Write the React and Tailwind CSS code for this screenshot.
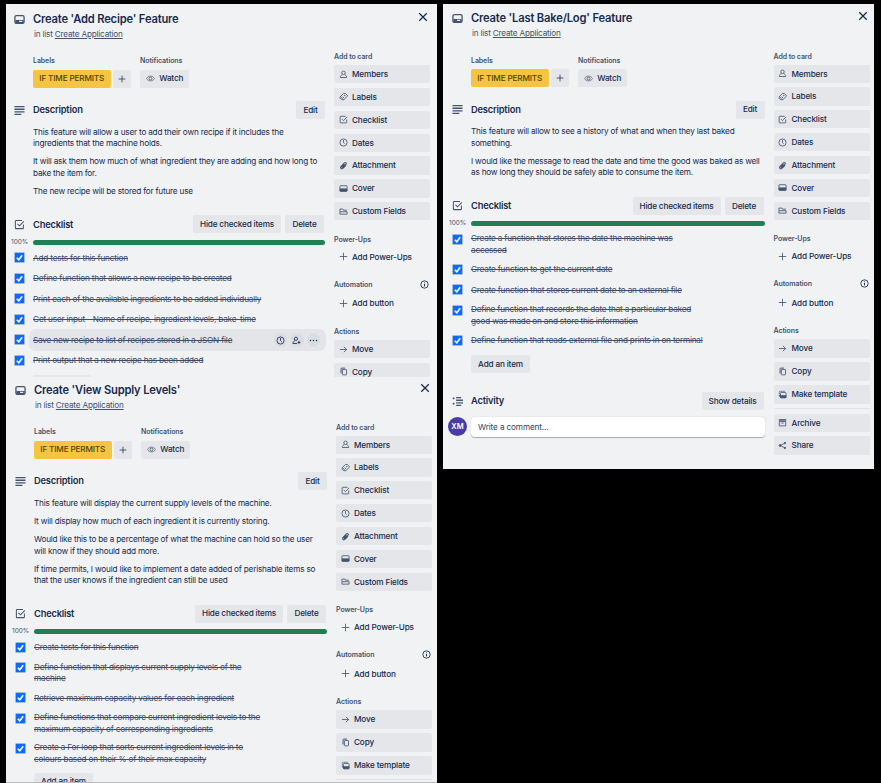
import React from "react";

const paths = {
  card: (
    <>
      <rect x="2" y="3.5" width="20" height="17" rx="3" strokeWidth="2.8" />
      <path d="M3 13h18v7H3z" fill="currentColor" stroke="none" />
      <path d="M11 16h7" stroke="#f1f2f4" strokeWidth="2.6" />
    </>
  ),
  desc: <path d="M1 3.5h22M1 9.2h22M1 14.9h22M1 20.6h15" strokeWidth="2.9" />,
  check: (
    <>
      <path d="M17.5 3.5H4.5a1.5 1.5 0 0 0-1.5 1.5v14.5a1.5 1.5 0 0 0 1.5 1.5h14.5a1.5 1.5 0 0 0 1.5-1.5V12" />
      <path d="M7.5 10.5l4.5 4.5L21.5 5" />
    </>
  ),
  member: (
    <>
      <circle cx="12" cy="7.5" r="4.6" />
      <path d="M9 12.5c-3.500 1-5.500 3.500-5.500 7.500h17c0-4-2-6.500-5.500-7.500" />
    </>
  ),
  addMember: (
    <>
      <circle cx="10.500" cy="7.500" r="4.300" />
      <path d="M8 12.500c-3.500 1-5.500 3.500-5.500 7.500h11M18.500 13v8M14.500 17h8" />
    </>
  ),
  label: (
    <>
      <path d="M4 12l7-7.500a2 2 0 0 1 1.500-.6h4.500l5 5.100a2 2 0 0 1 0 2.600l-8.500 8.400a2 2 0 0 1-2.800 0z" />
      <path d="M4 11.500c-2 2.500-1.500 5 .5 7 2 2 4.500 2.500 7 1.500M9.500 12.500l4 3.500" />
      <circle cx="15.500" cy="9.500" r="1" />
    </>
  ),
  clock: (
    <>
      <circle cx="12" cy="12" r="9.500" />
      <path d="M12 5.500v7l3 2.500" />
    </>
  ),
  clip: (
    <path
      d="M18.500 11.500l-7.500 7.700c-4.200 4-9-1-5.200-5.200l8.700-8.800c3-2.800 6.600 1 3.800 3.800l-7.800 8c-1.600 1.400-3.200-.4-1.800-1.900l6-6.200"
      strokeWidth="2.900"
    />
  ),
  cover: (
    <>
      <rect x="2.500" y="4.500" width="19" height="15" rx="1.500" />
      <path d="M3 13h18v6H3z" fill="currentColor" />
    </>
  ),
  fields: (
    <>
      <path d="M2.500 12V5.500h8l1.500 3h9" />
      <path d="M2.500 12.500h19v6.500h-19z" />
    </>
  ),
  plus: <path d="M12 2v20M2 12h20" strokeWidth="2.200" />,
  arrow: <path d="M2.500 12h18M13 5l7.500 7-7.500 7" />,
  copy: (
    <>
      <rect x="9" y="6.500" width="11" height="14.500" rx="1.500" />
      <path d="M5.500 17V4.500A1.500 1.500 0 0 1 7 3h9" strokeWidth="2.600" />
    </>
  ),
  template: (
    <>
      <path d="M3.500 16V5A1.500 1.500 0 0 1 5 3.500h13" strokeDasharray="4 1.500" />
      <rect x="6.500" y="6.500" width="15" height="14.500" rx="2" />
      <path d="M4 15h17v5H7z" fill="currentColor" />
    </>
  ),
  archive: (
    <>
      <path d="M3 4h18v3H3z" />
      <path d="M3.500 9.500h17V21h-17zM9 13.500h6" />
    </>
  ),
  share: (
    <>
      <path d="M18.500 5.500L6 12l12.500 6.500" />
      <circle cx="5.500" cy="12" r="2.500" fill="currentColor" />
      <circle cx="18.500" cy="5.500" r="2" fill="currentColor" />
      <circle cx="18.500" cy="18.500" r="2" fill="currentColor" />
    </>
  ),
  eye: (
    <>
      <path d="M1.500 12C5 3.500 19 3.500 22.500 12 19 20.500 5 20.500 1.500 12z" strokeWidth="1.700" />
      <circle cx="12" cy="12" r="4" />
    </>
  ),
  info: (
    <>
      <circle cx="12" cy="12" r="9.800" strokeWidth="2.300" />
      <path d="M12 10.500v6.500M12 6.500v2" strokeWidth="2.600" />
    </>
  ),
  dots: (
    <g fill="currentColor" stroke="none">
      <circle cx="4" cy="12" r="2" />
      <circle cx="12" cy="12" r="2" />
      <circle cx="20" cy="12" r="2" />
    </g>
  ),
  close: <path d="M3 3l18 18M21 3L3 21" strokeWidth="3" />,
  activity: (
    <>
      <path d="M9 3.500h11M9 9.200h15M9 14.900h15M9 20.600h11" strokeWidth="2.900" />
      <path d="M3.500 3v4M1.500 5h4M3.500 14.500v4M1.500 16.500h4" strokeWidth="2.600" />
    </>
  ),
};

function Icon({ name, className = "size-[9px]" }) {
  return (
    <svg
      viewBox="0 0 24 24"
      fill="none"
      stroke="currentColor"
      strokeWidth="2.2"
      className={`shrink-0 ${className}`}
    >
      {paths[name]}
    </svg>
  );
}

function Button({ children, className = "" }) {
  return (
    <button
      className={`flex h-[18px] items-center justify-center rounded-[2px] bg-[#e4e6e9] font-medium tracking-[-0.17px] whitespace-nowrap ${className}`}
    >
      {children}
    </button>
  );
}

function SideButton({ icon, children, ghost }) {
  return (
    <button
      className={`flex h-[18.3px] w-full shrink-0 items-center rounded-[2px] pl-[4.500px] font-medium tracking-[-0.14px] whitespace-nowrap ${ghost ? "" : "bg-[#e4e6e9]"}`}
    >
      <Icon name={icon} className="size-[9px] text-[#44546f]" />
      <span className="ml-[4.500px]">{children}</span>
    </button>
  );
}

function SideHeading({ children }) {
  return (
    <h3 className="flex h-[10px] items-center text-[7px] font-semibold tracking-[-0.08px] whitespace-nowrap text-[#44546f]">
      {children}
    </h3>
  );
}

function Sidebar({ full, className }) {
  return (
    <aside className={`flex shrink-0 flex-col ${className}`}>
      <div className="relative top-[0.600px]">
        <SideHeading>Add to card</SideHeading>
      </div>
      <div className="mt-[3px] flex flex-col gap-[4.550px]">
        <SideButton icon="member">Members</SideButton>
        <SideButton icon="label">Labels</SideButton>
        <SideButton icon="check">Checklist</SideButton>
        <SideButton icon="clock">Dates</SideButton>
        <SideButton icon="clip">Attachment</SideButton>
        <SideButton icon="cover">Cover</SideButton>
        <SideButton icon="fields">Custom Fields</SideButton>
      </div>
      <div className="mt-[14.500px]">
        <SideHeading>Power-Ups</SideHeading>
      </div>
      <div className="mt-[2.700px]">
        <SideButton icon="plus" ghost>Add Power-Ups</SideButton>
      </div>
      <div className="mt-[14.300px] flex items-center justify-between pr-[1px]">
        <SideHeading>Automation</SideHeading>
        <Icon name="info" className="-mt-[2px] size-[9px]" />
      </div>
      <div className="mt-[4px]">
        <SideButton icon="plus" ghost>Add button</SideButton>
      </div>
      <div className="mt-[14.500px]">
        <SideHeading>Actions</SideHeading>
      </div>
      <div className="mt-[3px] flex flex-col gap-[4.600px]">
        <SideButton icon="arrow">Move</SideButton>
        <SideButton icon="copy">Copy</SideButton>
        <SideButton icon="template">Make template</SideButton>
      </div>
      <div className="mt-[4px] h-px shrink-0 bg-[#e2e4e8]" />
      {full && (
        <div className="mt-[5px] flex flex-col gap-[4.600px]">
          <SideButton icon="archive">Archive</SideButton>
          <SideButton icon="share">Share</SideButton>
        </div>
      )}
    </aside>
  );
}

function Section({ icon, title, children }) {
  return (
    <div className="flex h-[18px] items-center">
      <Icon name={icon} className="mr-[8px] -ml-[19px] size-[11px] text-[#44546f]" />
      <h2 className="mr-auto pt-[0.500px] text-[9.300px] font-semibold tracking-[-0.2px] whitespace-nowrap">{title}</h2>
      {children}
    </div>
  );
}

function Checkbox() {
  return (
    <span className="mt-[5.500px] mr-[9px] -ml-[18px] flex size-[9px] shrink-0 items-center justify-center bg-[#0a6cff] ring-[0.5px] ring-[#5f7fb5]">
      <svg viewBox="0 0 10 10" className="size-[9px]" fill="none" stroke="white" strokeWidth="1.700">
        <path d="M2 5.300l2.200 2.200L8 2.500" />
      </svg>
    </span>
  );
}

function Item({ lines, hovered }) {
  return (
    <li className={`relative flex ${lines.length > 1 ? "h-[30.200px]" : "h-[20.500px]"}`}>
      {hovered && <span className="absolute -inset-y-px -right-px -left-[4px] rounded-[7px] bg-[#e3e5e8]" />}
      <Checkbox />
      <div className="relative flex flex-1 flex-col justify-center pt-[0.600px] tracking-[-0.185px] text-[#3c4c69]">
        {lines.map((l) => (
          <p key={l} className="leading-[11.400px] whitespace-nowrap line-through">{l}</p>
        ))}
      </div>
      {hovered && (
        <div className="relative flex items-center gap-[3px] pr-[5px]">
          {["clock", "addMember", "dots"].map((n) => (
            <span key={n} className="flex size-[13.500px] items-center justify-center rounded-full bg-[#dadde2]">
              <Icon name={n} />
            </span>
          ))}
        </div>
      )}
    </li>
  );
}

function Card({ data, className, bodyClass, mainClass, sideClass, closeClass }) {
  return (
    <article className={`relative flex shrink-0 overflow-hidden bg-[#f1f2f4] ${className}`}>
      <Icon name="close" className={`absolute size-[10px] ${closeClass}`} />
      <div className={`flex items-start ${bodyClass}`}>
        <main className={`shrink-0 ${mainClass}`}>
          <header className="flex h-[18px] items-center">
            <Icon name="card" className="mr-[8px] -ml-[19px] size-[11px] text-[#44546f]" />
            <h1 className="pt-[0.600px] text-[11.200px] font-semibold tracking-[-0.18px] whitespace-nowrap">{data.title}</h1>
          </header>
          <p className="flex h-[12px] items-center pl-[1px] tracking-[-0.2px] whitespace-pre text-[#44546f]">
            in list <span className="underline">Create Application</span>
          </p>
          <div className="mt-[16.500px] flex">
            <div className="w-[107px]">
              <SideHeading>Labels</SideHeading>
              <div className="mt-[3px] flex gap-[2.500px]">
                <span className="flex h-[18px] w-[77.500px] items-center justify-center rounded-[2px] bg-[#f5c542] font-medium tracking-[-0.16px] whitespace-nowrap text-[#533f04]">
                  IF TIME PERMITS
                </span>
                <Button className="w-[18px]"><Icon name="plus" className="size-[8px]" /></Button>
              </div>
            </div>
            <div>
              <SideHeading>Notifications</SideHeading>
              <Button className="mt-[3px] w-[49px]">
                <Icon name="eye" className="mr-[4.500px] size-[9px] text-[#44546f]" />
                Watch
              </Button>
            </div>
          </div>
          <div className="mt-[13.500px]">
            <Section icon="desc" title="Description">
              <Button className="w-[29px]">Edit</Button>
            </Section>
          </div>
          <div className="mt-[7.700px] flex flex-col gap-[6.700px] tracking-[-0.195px]">
            {data.paragraphs.map((lines) => (
              <div key={lines[0]}>
                {lines.map((l) => (
                  <p key={l} className="leading-[11.500px] whitespace-nowrap">{l}</p>
                ))}
              </div>
            ))}
          </div>
          <div className="mt-[17.800px]">
            <Section icon="check" title="Checklist">
              <Button className="w-[88px]">Hide checked items</Button>
              <Button className="mr-[1px] ml-[4px] w-[39px]">Delete</Button>
            </Section>
          </div>
          <div className="mt-[6.500px] flex h-[5px] items-center">
            <span className="-ml-[22px] w-[22px] pt-[0.500px] text-[6.500px] whitespace-nowrap text-[#44546f]">100%</span>
            <span className="h-[5px] flex-1 rounded-full bg-[#1f7f55]" />
          </div>
          <ul className="mt-[3px]">
            {data.items.map((it, i) => (
              <Item key={it[0]} lines={it} hovered={data.hovered === i} />
            ))}
          </ul>
          {data.collapsed ? (
            <div className="mt-[4.500px] h-[18px] w-[58px] rounded-[2px] bg-[#e4e6e9]" />
          ) : (
            <Button className="mt-[4px] w-[59px]">Add an item</Button>
          )}
          {data.activity && (
            <>
              <div className="mt-[19px]">
                <Section icon="activity" title="Activity">
                  <Button className="mr-[1px] w-[62px]">Show details</Button>
                </Section>
              </div>
              <div className="mt-[7px] flex items-start">
                <span className="mr-[4px] -ml-[23px] flex size-[19px] items-center justify-center rounded-full bg-[#4a3ba5] text-[7.500px] font-semibold text-white">
                  XM
                </span>
                <div className="flex h-[20px] flex-1 items-center rounded-[4px] bg-white pl-[7px] tracking-[-0.13px] text-[#33435f] shadow-[0_0.500px_1px_#091e4255]">
                  Write a comment…
                </div>
              </div>
            </>
          )}
        </main>
        <Sidebar full={data.activity} className={sideClass} />
      </div>
    </article>
  );
}

const addRecipe = {
  title: "Create 'Add Recipe' Feature",
  paragraphs: [
    ["This feature will allow a user to add their own recipe if it includes the", "ingredients that the machine holds."],
    ["It will ask them how much of what ingredient they are adding and how long to", "bake the item for."],
    ["The new recipe will be stored for future use"],
  ],
  items: [
    ["Add tests for this function"],
    ["Define function that allows a new recipe to be created"],
    ["Print each of the available ingredients to be added individually"],
    ["Get user input - Name of recipe, ingredient levels, bake-time"],
    ["Save new recipe to list of recipes stored in a JSON file"],
    ["Print output that a new recipe has been added"],
  ],
  hovered: 4,
  collapsed: true,
};

const supply = {
  title: "Create 'View Supply Levels'",
  paragraphs: [
    ["This feature will display the current supply levels of the machine."],
    ["It will display how much of each ingredient it is currently storing."],
    ["Would like this to be a percentage of what the machine can hold so the user", "will know if they should add more."],
    ["If time permits, I would like to implement a date added of perishable items so", "that the user knows if the ingredient can still be used"],
  ],
  items: [
    ["Create tests for this function"],
    ["Define function that displays current supply levels of the", "machine"],
    ["Retrieve maximum capacity values for each ingredient"],
    ["Define functions that compare current ingredient levels to the", "maximum capacity of corresponding ingredients"],
    ["Create a For loop that sorts current ingredient levels in to", "colours based on their % of their max capacity"],
  ],
};

const bakeLog = {
  title: "Create 'Last Bake/Log' Feature",
  paragraphs: [
    ["This feature will allow to see a history of what and when they last baked", "something."],
    ["I would like the message to read the date and time the good was baked as well", "as how long they should be safely able to consume the item."],
  ],
  items: [
    ["Create a function that stores the date the machine was", "accessed"],
    ["Create function to get the current date"],
    ["Create function that stores current date to an external file"],
    ["Define function that records the date that a particular baked", "good was made on and store this information"],
    ["Define function that reads external file and prints in on terminal"],
  ],
  activity: true,
};

export default function App() {
  return (
    <div className="flex h-[783px] w-[881px] items-start gap-[6px] overflow-hidden bg-black pt-[4px] pl-[6px] font-['Inter',sans-serif] text-[8.200px] text-[#172b4d]">
      <div className="flex w-[431px] flex-col">
        <Card
          data={addRecipe}
          className="h-[373px]"
          bodyClass="pt-[6px] pl-[27px]"
          mainClass="w-[292px]"
          sideClass="mt-[42px] ml-[9px] w-[95.500px]"
          closeClass="top-[8px] right-[9.500px]"
        />
        <Card
          data={supply}
          className="h-[406px] border-b border-[#b9bbbe]"
          bodyClass="pt-[4px] pl-[28px]"
          mainClass="w-[293px]"
          sideClass="mt-[41.500px] ml-[9px] w-[96px]"
          closeClass="top-[6px] right-[7.500px]"
        />
      </div>
      <Card
        data={bakeLog}
        className="h-[465px] w-[431px]"
        bodyClass="pt-[5.500px] pl-[28px]"
        mainClass="w-[293.500px]"
        sideClass="mt-[42px] ml-[9px] w-[96px]"
        closeClass="top-[7px] right-[6.500px]"
      />
    </div>
  );
}
